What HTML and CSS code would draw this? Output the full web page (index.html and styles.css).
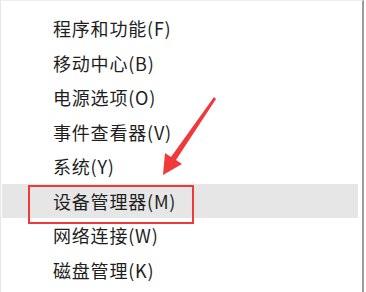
FILE: index.html
```html
<!DOCTYPE html>
<html lang="zh-CN">
<head>
<meta charset="utf-8">
<title>菜单</title>
<link rel="stylesheet" href="styles.css">
</head>
<body>
<div class="menu">
  <ul class="items">
    <li class="item">程序和功能(F)</li>
    <li class="item">移动中心(B)</li>
    <li class="item">电源选项(O)</li>
    <li class="item">事件查看器(V)</li>
    <li class="item">系统(Y)</li>
    <li class="item item-active">设备管理器(M)<span class="mark"></span></li>
    <li class="item">网络连接(W)</li>
    <li class="item">磁盘管理(K)</li>
  </ul>
  <svg class="arrow" width="366" height="292" viewBox="0 0 366 292" aria-hidden="true">
    <polygon points="214,97 216,99 176,160 182,164 163,175 165,153 171,157" fill="#f0393a"/>
  </svg>
</div>
</body>
</html>
```
FILE: styles.css
```css
html, body {
  margin: 0;
  padding: 0;
  background: #ffffff;
}
body {
  width: 366px;
  height: 292px;
  overflow: hidden;
  font-family: "Noto Sans CJK SC", "Noto Sans", sans-serif;
}
.menu {
  position: relative;
  width: 361px;
  height: 291px;
  border-top: 1px solid #eeeeee;
  border-left: 1px solid #e6e6e6;
  border-right: 2px solid #9c9c9c;
  background: #ffffff;
}
.items {
  list-style: none;
  margin: 0;
  padding: 10px 4px 0 1px;
}
.item {
  height: 34.5px;
  line-height: 34.5px;
  padding-left: 51px;
  font-size: 18px;
  letter-spacing: 0.8px;
  color: #1e1e1e;
  white-space: nowrap;
}
.item-active {
  position: relative;
  background: #e6e6e6;
}
.mark {
  position: absolute;
  left: 26px;
  top: 1px;
  width: 162px;
  height: 35px;
  border: 2px solid #ee3a3a;
}
.arrow {
  position: absolute;
  left: -1px;
  top: -1px;
  pointer-events: none;
}
```
